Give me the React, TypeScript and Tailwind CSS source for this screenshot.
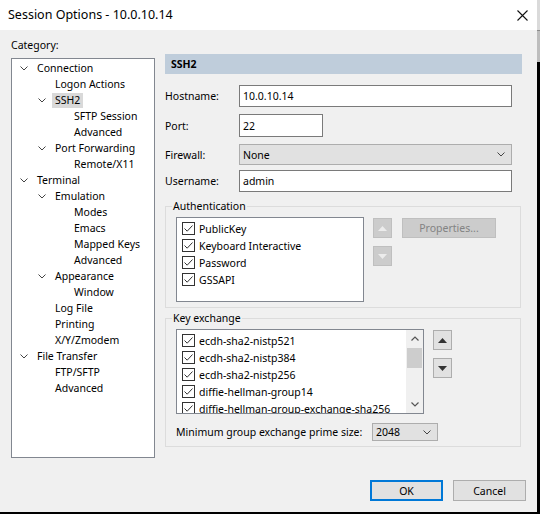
import React from 'react';

type TreeNode = { label: string; level: 0 | 1 | 2; expanded?: boolean; selected?: boolean };

const tree: TreeNode[] = [
  { label: 'Connection', level: 0, expanded: true },
  { label: 'Logon Actions', level: 1 },
  { label: 'SSH2', level: 1, expanded: true, selected: true },
  { label: 'SFTP Session', level: 2 },
  { label: 'Advanced', level: 2 },
  { label: 'Port Forwarding', level: 1, expanded: true },
  { label: 'Remote/X11', level: 2 },
  { label: 'Terminal', level: 0, expanded: true },
  { label: 'Emulation', level: 1, expanded: true },
  { label: 'Modes', level: 2 },
  { label: 'Emacs', level: 2 },
  { label: 'Mapped Keys', level: 2 },
  { label: 'Advanced', level: 2 },
  { label: 'Appearance', level: 1, expanded: true },
  { label: 'Window', level: 2 },
  { label: 'Log File', level: 1 },
  { label: 'Printing', level: 1 },
  { label: 'X/Y/Zmodem', level: 1 },
  { label: 'File Transfer', level: 0, expanded: true },
  { label: 'FTP/SFTP', level: 1 },
  { label: 'Advanced', level: 1 },
];

const indent = ['pl-[8px]', 'pl-[26px]', 'pl-[45px]'];

const authMethods = ['PublicKey', 'Keyboard Interactive', 'Password', 'GSSAPI'];
const kexMethods = [
  'ecdh-sha2-nistp521',
  'ecdh-sha2-nistp384',
  'ecdh-sha2-nistp256',
  'diffie-hellman-group14',
  'diffie-hellman-group-exchange-sha256',
];

function Chevron() {
  return (
    <svg width="8" height="5" viewBox="0 0 8 5">
      <path d="M0.5 0.5 L4 4 L7.5 0.5" fill="none" stroke="#444" strokeWidth="1" />
    </svg>
  );
}

function CheckBox() {
  return (
    <span className="w-[13px] h-[13px] border border-[#333] bg-white flex items-center justify-center shrink-0">
      <svg width="11" height="11" viewBox="0 0 11 11">
        <path d="M1.5 5.5 L4.2 8.2 L9.5 2.5" fill="none" stroke="#333" strokeWidth="1" />
      </svg>
    </span>
  );
}

function CheckRow({ label }: { label: string }) {
  return (
    <div className="flex items-center h-[17px] shrink-0 whitespace-nowrap">
      <CheckBox />
      <span className="ml-[4px]">{label}</span>
    </div>
  );
}

function ArrowButton({ dir, disabled }: { dir: 'up' | 'down'; disabled?: boolean }) {
  return (
    <div
      className={`w-[19px] h-[20px] border flex items-center justify-center ${
        disabled ? 'bg-[#cccccc] border-[#bfbfbf]' : 'bg-[#e1e1e1] border-[#adadad]'
      }`}
    >
      <svg width="9" height="5" viewBox="0 0 9 5">
        <polygon
          points={dir === 'up' ? '0,5 4.5,0 9,5' : '0,0 4.5,5 9,0'}
          fill={disabled ? '#ececec' : '#333'}
        />
      </svg>
    </div>
  );
}

export default function App() {
  return (
    <div className="w-[540px] h-[514px] bg-black flex items-start font-['Noto_Sans',sans-serif] text-[10.5px] leading-[16px] text-black">
      {/* Dialog window */}
      <div className="w-[537px] h-[512px] bg-[#f0f0f0] flex flex-col">
        {/* Title bar */}
        <div className="h-[30px] bg-white flex items-center pl-[8px] pr-[9px] shrink-0 text-[12.5px]">
          <span className="flex-1">Session Options - 10.0.10.14</span>
          <svg width="11" height="11" viewBox="0 0 11 11">
            <path d="M0.5 0.5 L10.5 10.5 M10.5 0.5 L0.5 10.5" stroke="#111" strokeWidth="1.1" />
          </svg>
        </div>

        <div className="flex px-[11px]">
          {/* Category column */}
          <div className="w-[144px] flex flex-col">
            <div className="mt-[7px] h-[16px]">Category:</div>
            <div className="mt-[5px] h-[400px] bg-white border border-[#828790] pt-[1px]">
              {tree.map((n, i) => (
                <div key={i} className={`flex items-center h-[16px] ${indent[n.level]}`}>
                  <span className="w-[17px] flex items-center shrink-0">
                    {n.expanded && <Chevron />}
                  </span>
                  <span
                    className={`whitespace-nowrap h-[15px] leading-[15px] ${
                      n.selected ? 'bg-[#d9d9d9] -ml-[3px] px-[3px]' : ''
                    }`}
                  >
                    {n.label}
                  </span>
                </div>
              ))}
            </div>
          </div>

          {/* Settings panel */}
          <div className="ml-[10px] w-[357px] flex flex-col">
            <div className="mt-[24px] h-[20px] bg-[#bfcddb] flex items-center pl-[6px] font-bold">SSH2</div>

            <div className="mt-[11px] flex items-center h-[22px]">
              <span className="w-[74px]">Hostname:</span>
              <div className="w-[273px] h-[22px] bg-white border border-[#7a7a7a] flex items-center pl-[3px]">10.0.10.14</div>
            </div>
            <div className="mt-[7px] flex items-center h-[23px]">
              <span className="w-[74px]">Port:</span>
              <div className="w-[84px] h-[23px] bg-white border border-[#7a7a7a] flex items-center pl-[3px]">22</div>
            </div>
            <div className="mt-[7px] flex items-center h-[21px]">
              <span className="w-[74px]">Firewall:</span>
              <div className="w-[273px] h-[21px] bg-[#e1e1e1] border border-[#adadad] flex items-center pl-[3px] pr-[6px]">
                <span className="flex-1">None</span>
                <Chevron />
              </div>
            </div>
            <div className="mt-[5px] flex items-center h-[22px]">
              <span className="w-[74px]">Username:</span>
              <div className="w-[273px] h-[22px] bg-white border border-[#7a7a7a] flex items-center pl-[3px]">admin</div>
            </div>

            {/* Authentication */}
            <fieldset className="mt-[6px] w-[356px] border border-[#dcdcdc] pb-[5px]">
              <legend className="ml-[6px] px-[1px] leading-[16px]">Authentication</legend>
              <div className="mt-[3px] pl-[10px] flex items-start">
                <div className="w-[188px] h-[85px] bg-white border border-[#828790] pl-[5px] pt-[2px] flex flex-col">
                  {authMethods.map((m) => (
                    <CheckRow key={m} label={m} />
                  ))}
                </div>
                <div className="ml-[9px] flex flex-col gap-[8px] pt-[1px]">
                  <ArrowButton dir="up" disabled />
                  <ArrowButton dir="down" disabled />
                </div>
                <div className="ml-[10px] mt-[1px] w-[94px] h-[20px] bg-[#cccccc] border border-[#bfbfbf] text-[#838383] flex items-center justify-center">
                  Properties...
                </div>
              </div>
            </fieldset>

            {/* Key exchange */}
            <fieldset className="mt-[2px] w-[356px] border border-[#dcdcdc] pb-[5px]">
              <legend className="ml-[6px] px-[1px] leading-[16px]">Key exchange</legend>
              <div className="mt-[3px] pl-[10px] flex items-start">
                <div className="w-[248px] h-[85px] bg-white border border-[#828790] flex overflow-hidden">
                  <div className="flex-1 pl-[5px] pt-[2px] flex flex-col overflow-hidden">
                    {kexMethods.map((m) => (
                      <CheckRow key={m} label={m} />
                    ))}
                  </div>
                  <div className="w-[17px] bg-[#f0f0f0] flex flex-col items-center">
                    <div className="h-[17px] flex items-center justify-center">
                      <svg width="8" height="5" viewBox="0 0 8 5">
                        <path d="M0.5 4.5 L4 1 L7.5 4.5" fill="none" stroke="#555" strokeWidth="1.2" />
                      </svg>
                    </div>
                    <div className="w-[15px] h-[20px] bg-[#cdcdcd] mt-[1px]" />
                    <div className="flex-1" />
                    <div className="h-[17px] flex items-center justify-center">
                      <svg width="8" height="5" viewBox="0 0 8 5">
                        <path d="M0.5 0.5 L4 4 L7.5 0.5" fill="none" stroke="#555" strokeWidth="1.2" />
                      </svg>
                    </div>
                  </div>
                </div>
                <div className="ml-[9px] flex flex-col gap-[8px] pt-[1px]">
                  <ArrowButton dir="up" />
                  <ArrowButton dir="down" />
                </div>
              </div>
              <div className="mt-[9px] pl-[10px] flex items-center">
                <span className="w-[196px] whitespace-nowrap">Minimum group exchange prime size:</span>
                <div className="w-[66px] h-[18px] bg-[#e1e1e1] border border-[#adadad] flex items-center pl-[3px] pr-[6px]">
                  <span className="flex-1">2048</span>
                  <Chevron />
                </div>
              </div>
            </fieldset>
          </div>
        </div>

        {/* Dialog buttons */}
        <div className="mt-[22px] flex justify-end gap-[10px] pr-[11px]">
          <div className="w-[73px] h-[21px] bg-[#e1e1e1] border-2 border-[#0078d7] flex items-center justify-center">OK</div>
          <div className="w-[73px] h-[21px] bg-[#e1e1e1] border border-[#adadad] flex items-center justify-center">Cancel</div>
        </div>
      </div>

      {/* Background beyond the window edge */}
      <div className="w-[3px] flex flex-col">
        <div className="h-[30px] bg-[#dadada]" />
        <div className="h-[32px] bg-[#bdbdbd] border-t border-[#8a8a8a]" />
      </div>
    </div>
  );
}
